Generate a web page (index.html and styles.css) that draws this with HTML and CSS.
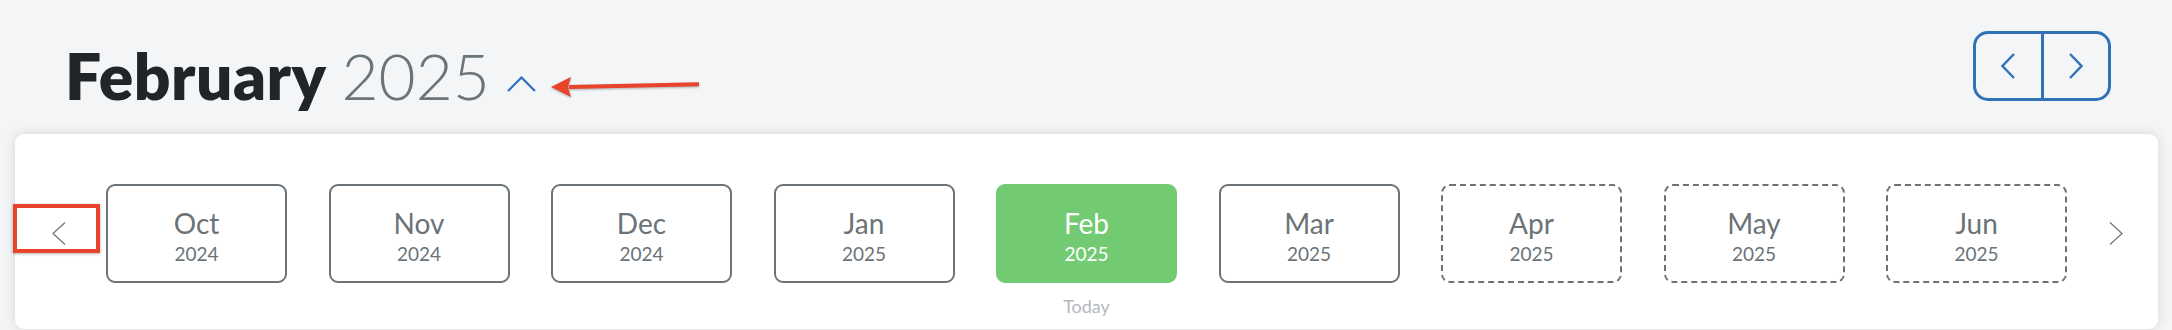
FILE: index.html
```html
<!DOCTYPE html>
<html lang="en">
<head>
<meta charset="utf-8">
<title>Month picker</title>
<link rel="stylesheet" href="styles.css">
</head>
<body>
<div class="page">
  <header class="header">
    <h1 class="title">
      <span class="title-month">February</span>
      <span class="title-year">2025</span>
      <button class="toggle" aria-label="Collapse">
        <svg width="29" height="16" viewBox="0 0 29 16"><polyline points="1,15 14.5,1.5 28,15" fill="none" stroke="#2f72b8" stroke-width="2.2"/></svg>
      </button>
    </h1>
    <div class="pager">
      <button class="pager-btn" aria-label="Previous">
        <svg width="14" height="26" viewBox="0 0 14 26"><polyline points="13,1 1.5,13 13,25" fill="none" stroke="#2f72b8" stroke-width="2.4"/></svg>
      </button>
      <button class="pager-btn" aria-label="Next">
        <svg width="14" height="26" viewBox="0 0 14 26"><polyline points="1,1 12.5,13 1,25" fill="none" stroke="#2f72b8" stroke-width="2.4"/></svg>
      </button>
    </div>
  </header>

  <section class="panel">
    <button class="scroll scroll-prev" aria-label="Scroll back">
      <svg width="14" height="23" viewBox="0 0 14 23"><polyline points="13,0.5 1,11.5 13,22.5" fill="none" stroke="#6b7378" stroke-width="1.2"/></svg>
    </button>
    <ul class="months">
      <li class="item"><div class="mcard"><span class="m">Oct</span><span class="y">2024</span></div></li>
      <li class="item"><div class="mcard"><span class="m">Nov</span><span class="y">2024</span></div></li>
      <li class="item"><div class="mcard"><span class="m">Dec</span><span class="y">2024</span></div></li>
      <li class="item"><div class="mcard"><span class="m">Jan</span><span class="y">2025</span></div></li>
      <li class="item"><div class="mcard current"><span class="m">Feb</span><span class="y">2025</span></div><span class="today">Today</span></li>
      <li class="item"><div class="mcard"><span class="m">Mar</span><span class="y">2025</span></div></li>
      <li class="item"><div class="mcard future"><span class="m">Apr</span><span class="y">2025</span></div></li>
      <li class="item"><div class="mcard future"><span class="m">May</span><span class="y">2025</span></div></li>
      <li class="item"><div class="mcard future"><span class="m">Jun</span><span class="y">2025</span></div></li>
    </ul>
    <button class="scroll scroll-next" aria-label="Scroll forward">
      <svg width="14" height="23" viewBox="0 0 14 23"><polyline points="1,0.5 13,11.5 1,22.5" fill="none" stroke="#6b7378" stroke-width="1.2"/></svg>
    </button>
  </section>

  <svg class="anno-arrow" width="160" height="30" viewBox="0 0 160 30">
    <line x1="24" y1="15" x2="154" y2="12.3" stroke="#e8432b" stroke-width="4"/>
    <polygon points="6,15 26,5 23,15 26,25" fill="#e8432b"/>
  </svg>
  <div class="anno-box"></div>
</div>
</body>
</html>
```

FILE: styles.css
```css
* { box-sizing: border-box; }

html, body {
  margin: 0;
  padding: 0;
}

body {
  background: #f4f5f7;
  font-family: Lato, "Noto Sans", "Liberation Sans", sans-serif;
  color: #212529;
  width: 2172px;
  height: 330px;
  overflow: hidden;
}

.page {
  position: relative;
  padding: 0 14px 0 15px;
}

.header {
  height: 134px;
  display: flex;
  justify-content: space-between;
  align-items: flex-start;
}

.title {
  margin: 44px 0 0 50px;
  display: flex;
  align-items: baseline;
  font-size: 64px;
  line-height: 64px;
}

.title-month {
  font-weight: 800;
  color: #212529;
  letter-spacing: 0.5px;
}

.title-year {
  font-weight: 300;
  color: #6b7479;
  margin-left: 15px;
}

.toggle {
  border: 0;
  background: none;
  padding: 0;
  margin-left: 17px;
  width: 29px;
  height: 16px;
  display: block;
  align-self: flex-start;
  margin-top: 32px;
}

.toggle svg { display: block; }

.pager {
  margin: 31px 47px 0 0;
  display: flex;
  width: 138px;
  height: 70px;
  border: 3px solid #2f72b8;
  border-radius: 15px;
}

.pager-btn {
  flex: 1;
  border: 0;
  background: none;
  padding: 0;
  display: flex;
  align-items: center;
  justify-content: center;
}

.pager-btn + .pager-btn {
  border-left: 3px solid #2f72b8;
}

.pager-btn svg { display: block; }

.panel {
  height: 195px;
  background: #fff;
  border-radius: 9px;
  box-shadow: 0 0 12px rgba(0, 0, 0, 0.13);
  display: flex;
  align-items: flex-start;
  padding-top: 50px;
}

.scroll {
  border: 0;
  background: none;
  height: 99px;
  display: flex;
  align-items: center;
  padding: 0;
}

.scroll svg { display: block; }

.scroll-prev {
  width: 91px;
  padding-left: 37px;
}

.scroll-next {
  width: 91px;
  padding-left: 42px;
}

.months {
  list-style: none;
  margin: 0;
  padding: 0;
  display: flex;
  gap: 41.5px;
}

.item {
  width: 181px;
  display: flex;
  flex-direction: column;
  align-items: center;
}

.mcard {
  width: 181px;
  height: 99px;
  border: 2px solid #6b7378;
  border-radius: 9px;
  display: flex;
  flex-direction: column;
  align-items: center;
  justify-content: center;
  padding-top: 4px;
  color: #6b7378;
}

.mcard.current {
  background: #72cb73;
  border-color: #72cb73;
  color: #fff;
}

.mcard.future {
  border-style: dashed;
}

.m {
  font-size: 28px;
  line-height: 34px;
}

.y {
  font-size: 19px;
  line-height: 24px;
  margin-top: 2px;
}

.today {
  margin-top: 12px;
  font-size: 18px;
  line-height: 22px;
  color: #b3b8be;
}

.anno-arrow {
  position: absolute;
  left: 545px;
  top: 72px;
  filter: drop-shadow(0 1px 1px rgba(0, 0, 0, 0.3));
}

.anno-box {
  position: absolute;
  left: 13px;
  top: 204px;
  width: 87px;
  height: 49px;
  border: 4px solid #e8432b;
  box-shadow: 0 1px 3px rgba(0, 0, 0, 0.3);
}
```
